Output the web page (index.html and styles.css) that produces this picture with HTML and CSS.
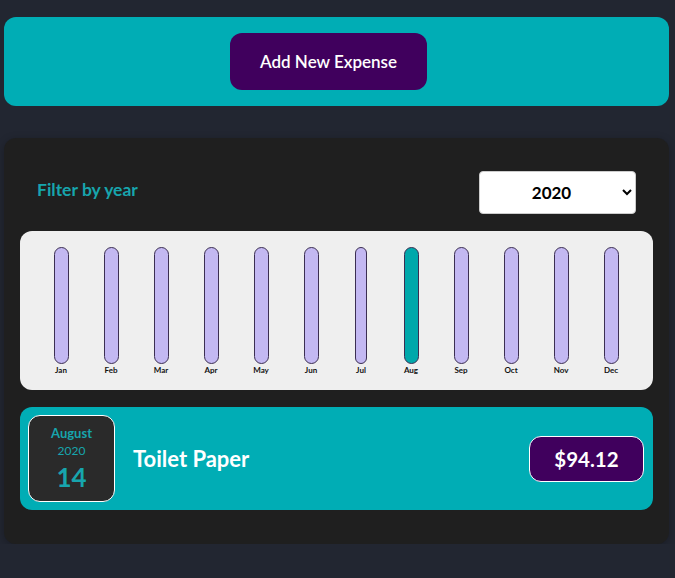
FILE: index.html
```html
<!DOCTYPE html>
<html lang="en">
<head>
<meta charset="utf-8">
<title>Expenses</title>
<link rel="stylesheet" href="styles.css">
</head>
<body>
<div class="app">
  <section class="new-expense">
    <button class="add-btn" type="button">Add New Expense</button>
  </section>
  <section class="expenses">
    <div class="filter">
      <label class="filter-label">Filter by year</label>
      <select class="filter-select">
        <option>2022</option>
        <option>2021</option>
        <option selected>2020</option>
        <option>2019</option>
      </select>
    </div>
    <div class="chart">
      <div class="bar"><div class="bar-inner"></div><span class="bar-label">Jan</span></div>
      <div class="bar"><div class="bar-inner"></div><span class="bar-label">Feb</span></div>
      <div class="bar"><div class="bar-inner"></div><span class="bar-label">Mar</span></div>
      <div class="bar"><div class="bar-inner"></div><span class="bar-label">Apr</span></div>
      <div class="bar"><div class="bar-inner"></div><span class="bar-label">May</span></div>
      <div class="bar"><div class="bar-inner"></div><span class="bar-label">Jun</span></div>
      <div class="bar"><div class="bar-inner narrow"></div><span class="bar-label">Jul</span></div>
      <div class="bar"><div class="bar-inner active"></div><span class="bar-label">Aug</span></div>
      <div class="bar"><div class="bar-inner"></div><span class="bar-label">Sep</span></div>
      <div class="bar"><div class="bar-inner"></div><span class="bar-label">Oct</span></div>
      <div class="bar"><div class="bar-inner"></div><span class="bar-label">Nov</span></div>
      <div class="bar"><div class="bar-inner"></div><span class="bar-label">Dec</span></div>
    </div>
    <div class="expense-item">
      <div class="date">
        <div class="date-month">August</div>
        <div class="date-year">2020</div>
        <div class="date-day">14</div>
      </div>
      <h2 class="item-title">Toilet Paper</h2>
      <div class="item-price">$94.12</div>
    </div>
  </section>
</div>
</body>
</html>
```
FILE: styles.css
```css
* { box-sizing: border-box; }
html, body { margin: 0; padding: 0; }
body {
  background: #222631;
  font-family: "Lato", "Noto Sans", sans-serif;
}
.app {
  padding: 17px 6px 0 4px;
  display: flex;
  flex-direction: column;
  gap: 32px;
}
.new-expense {
  background: #00adb5;
  border-radius: 12px;
  height: 89px;
  display: flex;
  justify-content: center;
  align-items: center;
  padding-right: 16px;
}
.add-btn {
  font-family: inherit;
  font-size: 17px;
  font-weight: 600;
  color: #fff;
  background: #40005d;
  border: none;
  border-radius: 12px;
  width: 197px;
  height: 57px;
  cursor: pointer;
}
.expenses {
  background: #1f1f1f;
  border-radius: 12px;
  padding: 33px 16px 34px 16px;
  box-shadow: 0 2px 8px rgba(0, 0, 0, 0.25);
}
.filter {
  display: flex;
  justify-content: space-between;
  align-items: center;
  padding: 0 17px 0 17px;
  margin-bottom: 17px;
}
.filter-label {
  color: #17a5ad;
  font-weight: 700;
  font-size: 17.5px;
  margin-top: -6px;
}
.filter-select {
  width: 157px;
  height: 43px;
  border-radius: 4px;
  border: 1px solid #ccc;
  background: #fff;
  font-family: inherit;
  font-size: 17px;
  font-weight: 700;
  text-align: center;
  text-align-last: center;
}
.chart {
  background: #efefef;
  border-radius: 12px;
  height: 159px;
  padding: 16px 17px 0 16px;
  display: grid;
  grid-template-columns: repeat(12, 1fr);
  align-items: start;
}
.bar {
  display: flex;
  flex-direction: column;
  align-items: center;
}
.bar-inner {
  width: 15px;
  height: 117px;
  border: 1px solid #3b2e52;
  border-radius: 8px;
  background: #c3b8f2;
}
.bar-inner.narrow { width: 12px; }
.bar-inner.active { background: #00a8ab; }
.bar-label {
  font-size: 8px;
  font-weight: 700;
  color: #111;
  margin-top: 1px;
  line-height: 10px;
}
.expense-item {
  margin-top: 17px;
  background: #00adb5;
  border-radius: 12px;
  height: 103px;
  padding: 8px 9px 8px 8px;
  display: flex;
  align-items: center;
}
.date {
  width: 87px;
  height: 87px;
  background: #2a2a2a;
  border: 1px solid #fff;
  border-radius: 12px;
  display: flex;
  flex-direction: column;
  align-items: center;
  justify-content: center;
  color: #17a5ad;
}
.date-month { font-size: 13px; font-weight: 700; line-height: 17px; }
.date-year { font-size: 12px; line-height: 17px; }
.date-day { font-size: 26px; font-weight: 700; line-height: 32px; margin-top: 2px; }
.item-title {
  flex: 1;
  margin: 0 0 0 18px;
  color: #fff;
  font-size: 22px;
  font-weight: 700;
}
.item-price {
  width: 115px;
  height: 46px;
  background: #40005d;
  border: 1px solid #fff;
  border-radius: 12px;
  color: #fff;
  font-size: 20.5px;
  font-weight: 700;
  display: flex;
  align-items: center;
  justify-content: center;
}
```
